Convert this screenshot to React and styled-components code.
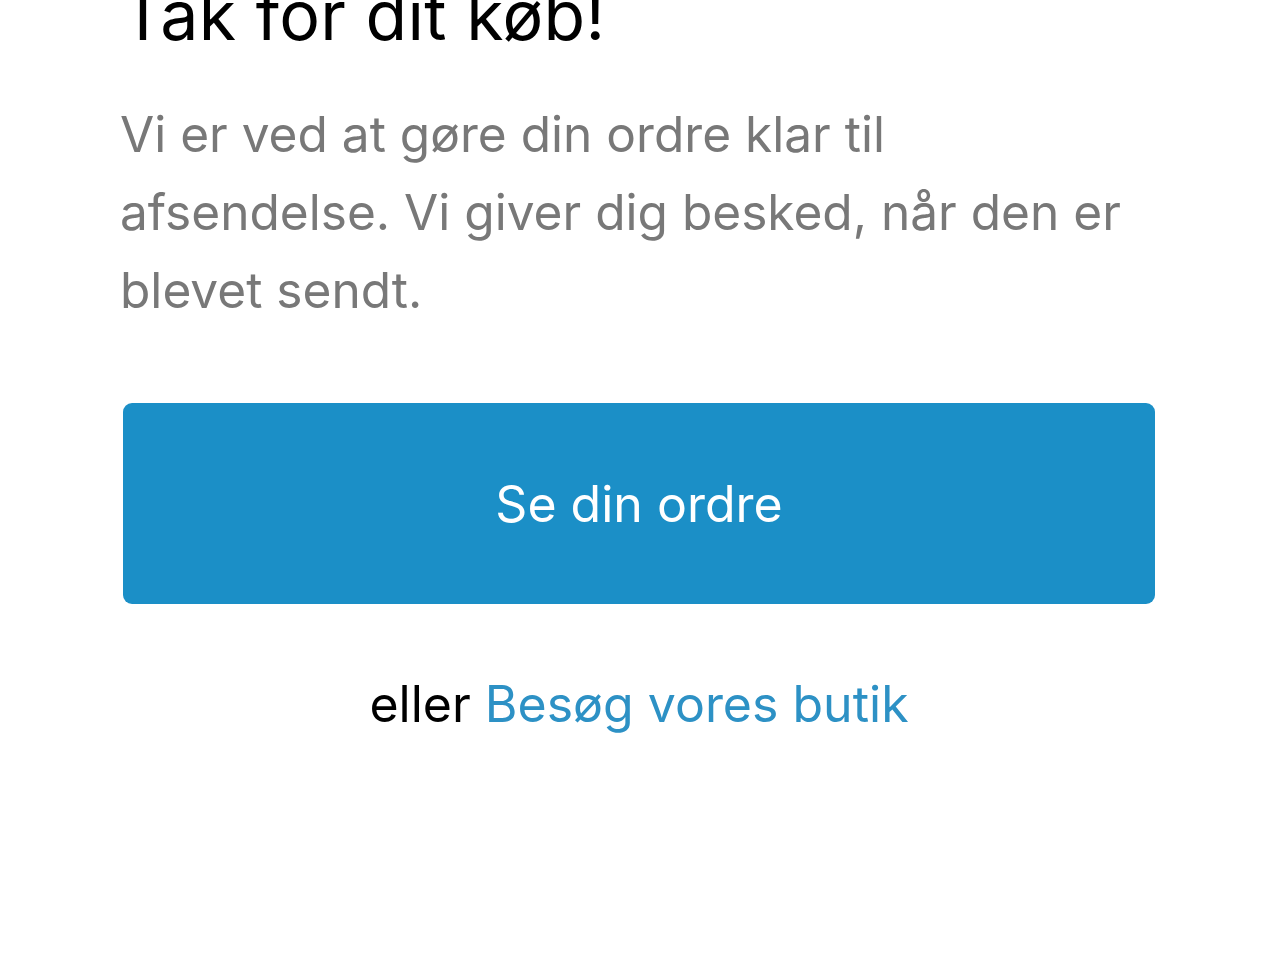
import React from "react";
import styled, { createGlobalStyle } from "styled-components";

const Global = createGlobalStyle`
  html, body {
    margin: 0;
    padding: 0;
    background: #ffffff;
  }
  body {
    font-family: Inter, "Noto Sans", "Liberation Sans", sans-serif;
  }
`;

const App = () => {
  return (
    <>
      <Global />
      <Page>
        <Title>Tak for dit køb!</Title>
        <Message>
          Vi er ved at gøre din ordre klar til afsendelse. Vi giver dig besked,
          når den er blevet sendt.
        </Message>
        <Button>Se din ordre</Button>
        <Alt>
          eller <Link>Besøg vores butik</Link>
        </Alt>
      </Page>
    </>
  );
};

export default App;

const Page = styled.div`
  width: 1280px;
  height: 960px;
  box-sizing: border-box;
  padding: 0 125px 0 123px;
  display: flex;
  flex-direction: column;
  overflow: hidden;
`;

const Title = styled.h1`
  margin: -25px 0 0 -2px;
  font-size: 68px;
  font-weight: 400;
  line-height: 80px;
  color: #000;
  letter-spacing: 0.3px;
`;

const Message = styled.p`
  margin: 40px 0 0 -3px;
  font-size: 49.6px;
  line-height: 78px;
  color: #787878;
  font-weight: 400;
`;

const Button = styled.div`
  margin-top: 74px;
  height: 201px;
  border-radius: 9px;
  background: #1b8fc7;
  color: #ffffff;
  font-size: 50px;
  display: flex;
  align-items: center;
  justify-content: center;
`;

const Alt = styled.div`
  margin-top: 70px;
  text-align: center;
  font-size: 50px;
  line-height: 60px;
  color: #000;
`;

const Link = styled.span`
  color: #2d91c5;
`;
